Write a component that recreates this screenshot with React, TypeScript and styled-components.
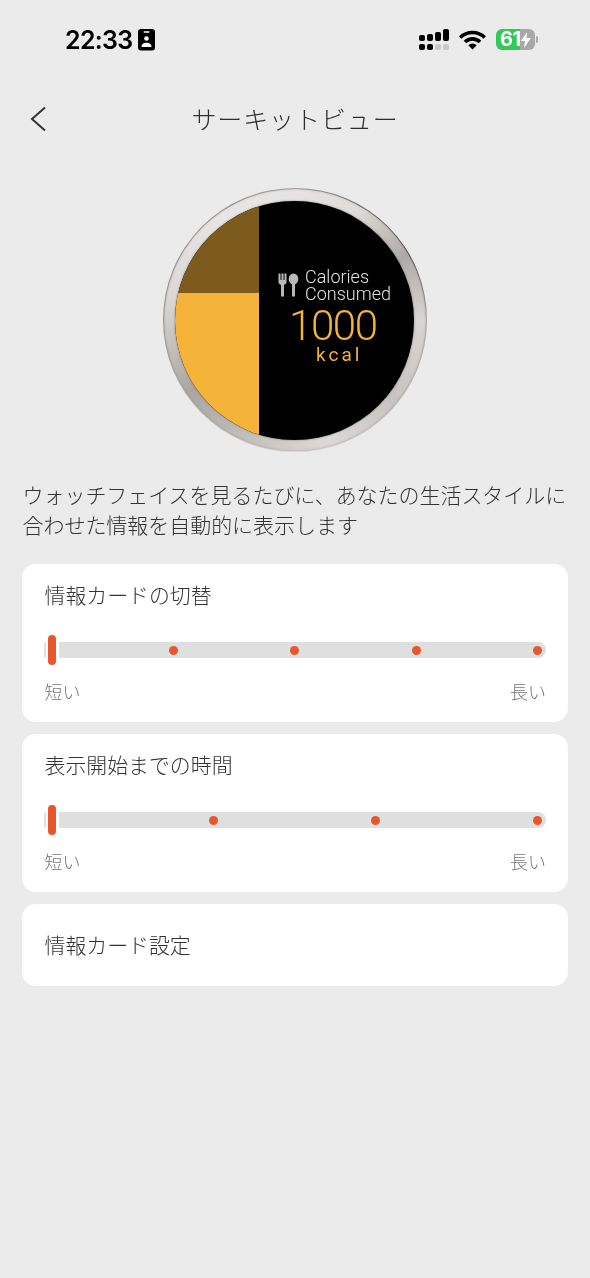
import styled, { createGlobalStyle } from 'styled-components';

const GlobalStyle = createGlobalStyle`
    html, body {
        margin: 0;
        padding: 0;
        background: #ebebeb;
    }
    body {
        font-family: "Noto Sans CJK JP", "Noto Sans", sans-serif;
    }
`;

const Page = styled.div`
    width: 590px;
    height: 1278px;
    overflow: hidden;
    display: flex;
    flex-direction: column;
    will-change: transform;
`;

const StatusBar = styled.div`
    height: 80px;
    box-sizing: border-box;
    padding: 29px 52px 0 65px;
    display: flex;
    align-items: flex-start;
`;

const Clock = styled.div`
    font-family: Inter, "Liberation Sans", sans-serif;
    font-size: 25px;
    line-height: 22px;
    font-weight: 600;
    letter-spacing: -0.7px;
    color: #000;
    width: 73px;
`;

const StatusIcons = styled.div`
    margin-left: auto;
    display: flex;
    align-items: flex-start;
    gap: 10px;
`;

const Battery = styled.div`
    position: relative;
    width: 39px;
    height: 21px;
    border-radius: 6px;
    background: linear-gradient(to right, #34c759 0 24px, #a8a8a8 24px);
    color: #fff;
    font-family: Inter, "Liberation Sans", sans-serif;
    font-size: 20px;
    font-weight: 700;
    letter-spacing: -0.6px;
    line-height: 21px;
    padding-left: 4px;
    box-sizing: border-box;
`;

const BatteryBox = styled.div`
    display: flex;
    align-items: center;
    gap: 1px;
    height: 21px;
`;

const BatteryNub = styled.div`
    width: 2px;
    height: 7px;
    border-radius: 0 2px 2px 0;
    background: #a8a8a8;
`;

const BoltMark = styled.svg`
    position: absolute;
    right: 3px;
    top: 3px;
`;

const NavBar = styled.div`
    height: 78px;
    display: grid;
    grid-template-columns: 80px 1fr 80px;
    align-items: center;
`;

const BackButton = styled.div`
    padding-left: 30px;
    display: flex;
    align-items: center;
`;

const Title = styled.div`
    text-align: center;
    font-size: 25px;
    line-height: 38px;
    padding-bottom: 2px;
    font-weight: 300;
    letter-spacing: 0.9px;
    color: #2e2e2e;
`;

const WatchWrap = styled.div`
    margin-top: 30px;
    display: flex;
    justify-content: center;
`;

const Bezel = styled.div`
    width: 264px;
    height: 264px;
    box-sizing: border-box;
    padding: 1px;
    border-radius: 50%;
    background: conic-gradient(
        #a09c9a 0deg,
        #6b6765 35deg,
        #4f4b49 60deg,
        #a8a4a2 90deg,
        #c4c1bf 140deg,
        #d4d1cf 180deg,
        #c2bfbd 225deg,
        #97938f 270deg,
        #8f8b89 320deg,
        #a09c9a 360deg
    );
`;

const BezelFace = styled.div`
    width: 100%;
    height: 100%;
    border-radius: 50%;
    display: flex;
    align-items: center;
    justify-content: center;
    box-shadow: inset 0 0 2px rgba(90, 86, 84, 0.35);
    background: conic-gradient(
        #e6e4e3 0deg,
        #dedbd9 30deg,
        #aeaaa7 60deg,
        #d8d5d3 90deg,
        #c6c3c1 130deg,
        #dcd9d8 165deg,
        #c1bdbb 205deg,
        #aaa6a3 235deg,
        #dbd8d7 280deg,
        #e8e6e5 325deg,
        #e6e4e3 360deg
    );
`;

const Screen = styled.div`
    width: 239px;
    height: 239px;
    margin-right: 1px;
    border-radius: 50%;
    overflow: hidden;
    background: #000;
    display: grid;
    grid-template-columns: 84px 1fr;
    box-shadow: 0 0 2px rgba(70, 70, 70, 0.7);
`;

const LeftSlices = styled.div`
    display: flex;
    flex-direction: column;
`;

const DimSlice = styled.div`
    height: 92px;
    background: #7d5b1c;
`;

const BrightSlice = styled.div`
    flex: 1;
    background: #f6b339;
`;

const Readout = styled.div`
    padding: 67px 0 0 19px;
    display: flex;
    flex-direction: column;
`;

const MetricHead = styled.div`
    display: flex;
    align-items: center;
    gap: 6px;
`;

const MetricName = styled.div`
    font-family: Roboto, "Liberation Sans", sans-serif;
    font-size: 18px;
    line-height: 17px;
    font-weight: 300;
    white-space: nowrap;
    color: #e2e2e2;
`;

const MetricValue = styled.div`
    font-family: Roboto, "Liberation Sans", sans-serif;
    font-size: 42px;
    line-height: 40px;
    font-weight: 300;
    letter-spacing: -1.4px;
    color: #f6b339;
    margin: 4px 0 0 11px;
`;

const MetricUnit = styled.div`
    font-family: Roboto, "Liberation Sans", sans-serif;
    font-size: 19px;
    line-height: 20px;
    letter-spacing: 3px;
    color: #f6b339;
    margin: -1px 0 0 38px;
`;

const Description = styled.p`
    margin: 27px 22px 0 22.500px;
    font-size: 21px;
    line-height: 30px;
    font-weight: 300;
    letter-spacing: -0.04px;
    color: #333;
`;

const Cards = styled.div`
    margin: 25px 22px 0;
    display: flex;
    flex-direction: column;
    gap: 12px;
`;

const Card = styled.div`
    background: #fff;
    border-radius: 14px;
    padding: 15px 22px 0 22.500px;
    height: 158px;
    box-sizing: border-box;
`;

const LinkCard = styled(Card)`
    height: 82px;
    padding-top: 25px;
`;

const CardTitle = styled.div`
    font-size: 20.900px;
    line-height: 30px;
    font-weight: 300;
    color: #333;
`;

const Slider = styled.div`
    margin-top: 26px;
    margin-left: -0.500px;
    height: 30px;
    display: flex;
    align-items: center;
`;

const Track = styled.div`
    flex: 1;
    height: 16px;
    border-radius: 2px 8px 8px 2px;
    background: #dfdfdf;
    display: flex;
    align-items: center;
    justify-content: space-between;
    padding: 0 4px 0 4px;
`;

const Thumb = styled.div`
    width: 8px;
    height: 30px;
    border-radius: 4px;
    background: #e8562e;
    box-shadow: 3px 0 0 0 #fff, -2px 0 0 0 #fff;
`;

const Dot = styled.div`
    width: 9px;
    height: 9px;
    border-radius: 50%;
    background: #e8562e;
`;

const ScaleLabels = styled.div`
    margin-top: 11px;
    display: flex;
    justify-content: space-between;
    font-size: 18px;
    line-height: 30px;
    font-weight: 300;
    color: #777;
`;

const SignalIcon = () => (
    <svg width="30" height="22" viewBox="0 0 30 22">
        <rect x="0" y="6" width="6" height="6" rx="2" fill="#000" />
        <rect x="8" y="5" width="6" height="7" rx="2" fill="#000" />
        <rect x="16" y="3" width="6" height="9" rx="2" fill="#000" />
        <rect x="24" y="0" width="6" height="12" rx="2" fill="#000" />
        <rect x="0" y="15" width="6" height="6" rx="2" fill="#000" />
        <rect x="8" y="15" width="6" height="6" rx="2" fill="#000" />
        <rect x="16" y="15" width="6" height="6" rx="2" fill="#c8c8c8" />
        <rect x="24" y="15" width="6" height="6" rx="2" fill="#c8c8c8" />
    </svg>
);

const WifiIcon = () => (
    <svg width="27" height="21" viewBox="0 0 27 21">
        <path d="M1.200 8.500a17.500 17.500 0 0 1 24.600 0" fill="none" stroke="#000" strokeWidth="3.600" />
        <path d="M6 13a10.500 10.500 0 0 1 15 0" fill="none" stroke="#000" strokeWidth="3.600" />
        <path d="M9.300 16.200a6 6 0 0 1 8.400 0L13.500 20.500z" fill="#000" />
    </svg>
);

const BadgeIcon = () => (
    <svg width="17" height="22" viewBox="0 0 17 22">
        <rect x="0" y="0" width="17" height="21.500" rx="3" fill="#000" />
        <rect x="5.500" y="2.200" width="6" height="1.600" rx="0.800" fill="#fff" />
        <circle cx="8.500" cy="9.500" r="2.300" fill="#fff" />
        <path d="M3.500 18c0-3 2.200-4.300 5-4.300s5 1.300 5 4.300z" fill="#fff" />
    </svg>
);

const CutleryIcon = () => (
    <svg width="21" height="24" viewBox="0 0 21 24">
        <path
            d="M0.500 0.500h2v6.500h1v-6.500h2v6.500h1v-6.500h2v8.500c0 1.500-1 2.500-2.500 2.800v11.700h-3v-11.700c-1.500-.3-2.500-1.300-2.500-2.800z"
            fill="#b8b8b8"
        />
        <ellipse cx="15.500" cy="6" rx="4.800" ry="5.500" fill="#b8b8b8" />
        <rect x="14" y="9" width="3" height="14.500" fill="#b8b8b8" />
    </svg>
);

const BackIcon = () => (
    <svg width="17" height="26" viewBox="0 0 17 26">
        <path d="M15 1.500 2 13l13 11.500" fill="none" stroke="#333" strokeWidth="2" />
    </svg>
);

const StepSlider = ({ stops }: { stops: number }) => (
    <Slider>
        <Track>
            <Thumb />
            {Array.from({ length: stops }, (_, i) => <Dot key={i} />)}
        </Track>
    </Slider>
);

const App = () => {
    return (
        <Page>
            <GlobalStyle />
            <StatusBar>
                <Clock>22:33</Clock>
                <BadgeIcon />
                <StatusIcons>
                    <SignalIcon />
                    <WifiIcon />
                    <BatteryBox>
                        <Battery>
                            61
                            <BoltMark width="12" height="16" viewBox="0 0 12 16">
                                <path d="M7 0 1 9h4l-1 7 7-10H6.500z" fill="#fff" />
                            </BoltMark>
                        </Battery>
                        <BatteryNub />
                    </BatteryBox>
                </StatusIcons>
            </StatusBar>
            <NavBar>
                <BackButton><BackIcon /></BackButton>
                <Title>サーキットビュー</Title>
            </NavBar>
            <WatchWrap>
                <Bezel>
                    <BezelFace>
                        <Screen>
                            <LeftSlices>
                                <DimSlice />
                                <BrightSlice />
                            </LeftSlices>
                            <Readout>
                                <MetricHead>
                                    <CutleryIcon />
                                    <MetricName>Calories<br />Consumed</MetricName>
                                </MetricHead>
                                <MetricValue>1000</MetricValue>
                                <MetricUnit>kcal</MetricUnit>
                            </Readout>
                        </Screen>
                    </BezelFace>
                </Bezel>
            </WatchWrap>
            <Description>
                ウォッチフェイスを見るたびに、あなたの生活スタイルに合わせた情報を自動的に表示します
            </Description>
            <Cards>
                <Card>
                    <CardTitle>情報カードの切替</CardTitle>
                    <StepSlider stops={4} />
                    <ScaleLabels><span>短い</span><span>長い</span></ScaleLabels>
                </Card>
                <Card>
                    <CardTitle>表示開始までの時間</CardTitle>
                    <StepSlider stops={3} />
                    <ScaleLabels><span>短い</span><span>長い</span></ScaleLabels>
                </Card>
                <LinkCard>
                    <CardTitle>情報カード設定</CardTitle>
                </LinkCard>
            </Cards>
        </Page>
    );
};

export default App;
